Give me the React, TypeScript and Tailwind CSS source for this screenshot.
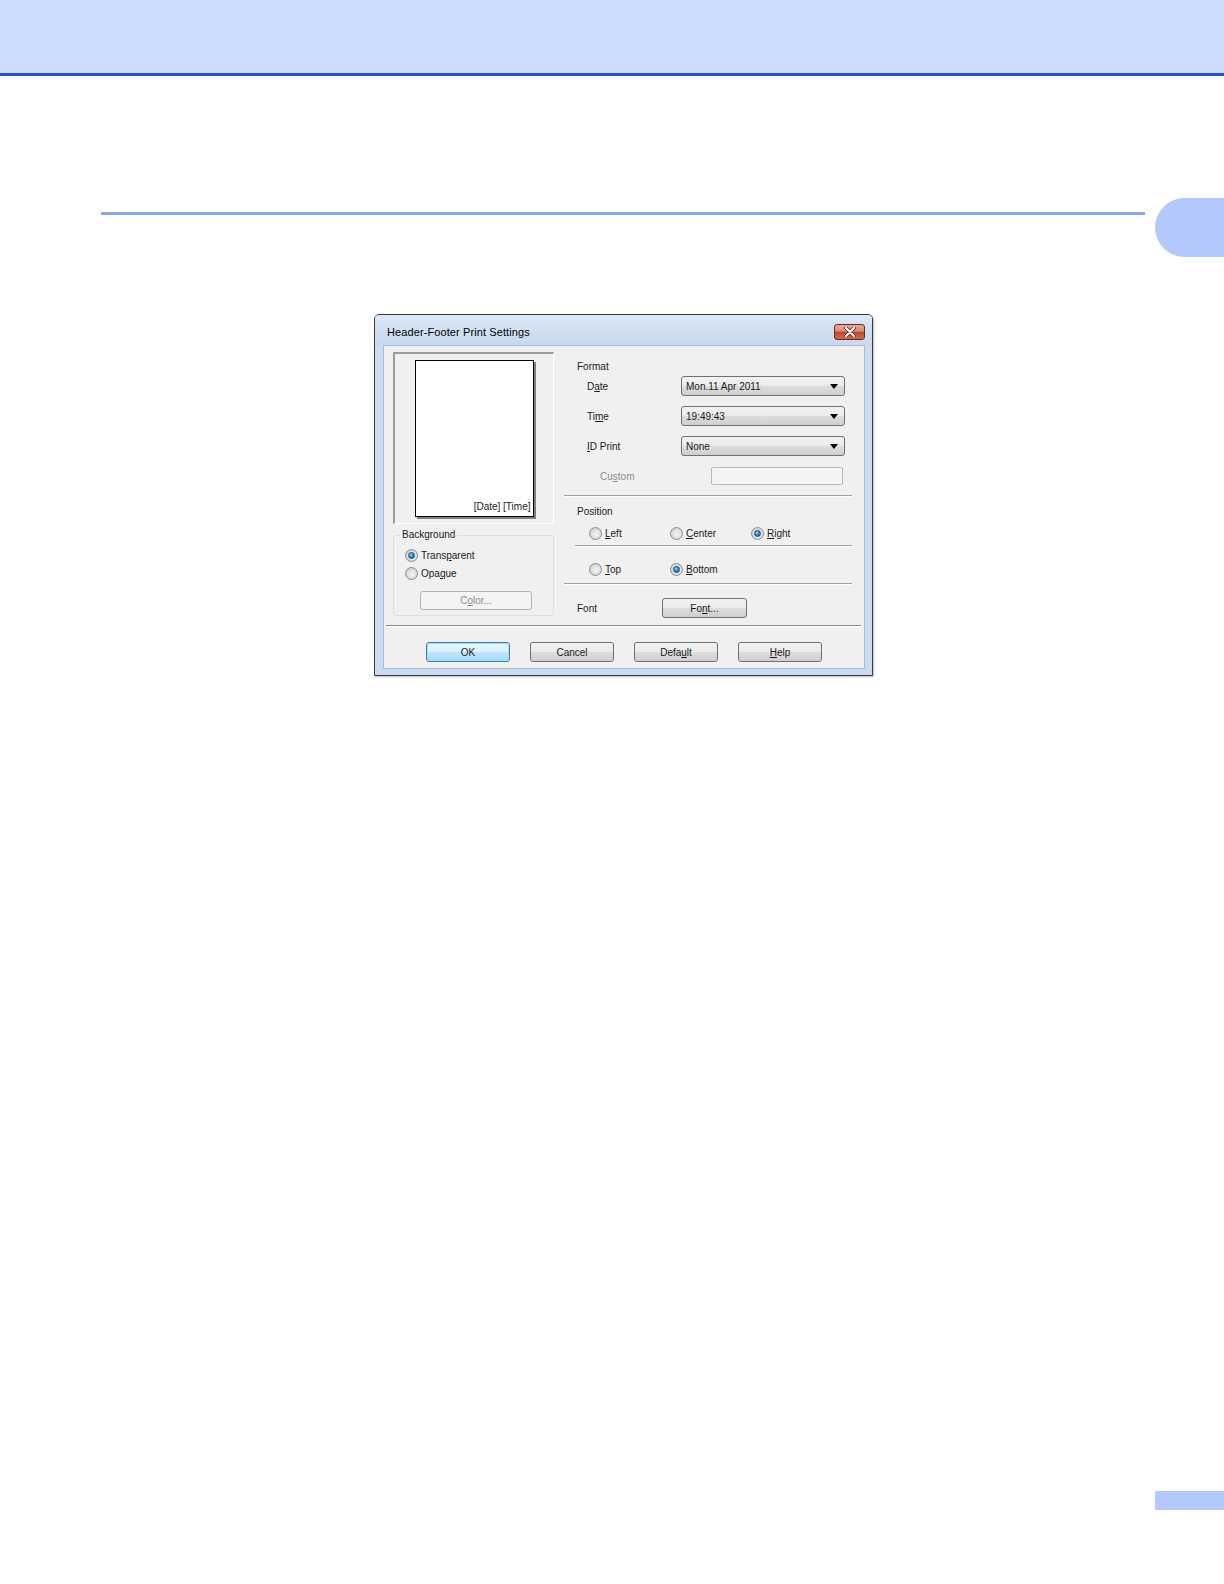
import React from 'react';

// Header-Footer Print Settings dialog, shown on a manual page.

const btnFace =
  'bg-[linear-gradient(#f2f2f2_0%,#ebebeb_50%,#dddddd_51%,#cfcfcf_100%)] border border-[#707070] rounded-[3px]';

const Radio = ({ checked }: { checked?: boolean }) => (
  <span className="w-[13px] h-[13px] shrink-0 rounded-full border border-[#8e8f8f] bg-[radial-gradient(circle_at_55%_55%,#f6f6f6_0%,#e2e2e2_45%,#bdbdbd_100%)] flex items-center justify-center">
    {checked && (
      <span className="w-[7px] h-[7px] rounded-full border border-[#1b4f7d] bg-[radial-gradient(circle_at_40%_35%,#9be0ff_0%,#2a8fd4_45%,#0b4a85_100%)]" />
    )}
  </span>
);

const RadioItem = ({ checked, children, w }: { checked?: boolean; children: React.ReactNode; w?: string }) => (
  <div className={`flex items-center gap-[3px] h-[14px] ${w ?? ''}`}>
    <Radio checked={checked} />
    <span>{children}</span>
  </div>
);

const Combo = ({ value }: { value: string }) => (
  <div className={`w-[164px] h-[20px] flex items-center justify-between pl-[4px] pr-[6px] ${btnFace}`}>
    <span>{value}</span>
    <svg width="8" height="5" viewBox="0 0 8 5">
      <polygon points="0,0 8,0 4,5" fill="#000" />
    </svg>
  </div>
);

const Button = ({ children, primary, w = 'w-[84px]' }: { children: React.ReactNode; primary?: boolean; w?: string }) => (
  <div
    className={`${w} h-[20px] flex items-center justify-center rounded-[3px] border ${
      primary
        ? 'border-[#3c7fb1] bg-[linear-gradient(#eaf6fd_0%,#d9f0fc_50%,#bee6fd_51%,#a7d9f5_100%)] shadow-[inset_0_0_0_1px_#a6dcf5]'
        : btnFace
    }`}
  >
    {children}
  </div>
);

const Sep = ({ className = '' }: { className?: string }) => (
  <div className={`h-[2px] border-t border-[#a0a0a0] border-b border-b-white ${className}`} />
);

const u = (s: string) => <span className="underline">{s}</span>;

export default function App() {
  return (
    <div className="min-h-[1584px] flex flex-col bg-white font-['Liberation_Sans',Arial,sans-serif] text-[10px] text-[#1a1a1a]">
      {/* bandeau du haut */}
      <div className="h-[76px] bg-[#cddcfd] border-b-[3px] border-[#1a56db]" />

      {/* trait de section + onglet */}
      <div className="flex items-start mt-[122px]">
        <div className="ml-[101px] mt-[14px] flex-1 h-[3px] bg-[#8aa4ef]" />
        <div className="ml-[10px] w-[69px] h-[59px] rounded-l-[30px] bg-[#b3c9fb]" />
      </div>

      {/* dialogue */}
      <div className="ml-[374px] mt-[57px] w-[499px] border border-[#3a3a3a] rounded-t-[5px] bg-[#c9dcf1] pl-[8px] pr-[7px] pb-[6px] shadow-[1px_1px_2px_rgba(0,0,0,0.25)]">
        {/* barre de titre */}
        <div className="h-[30px] -ml-[8px] -mr-[7px] pl-[12px] pr-[7px] rounded-t-[4px] bg-[linear-gradient(#dbe8f6,#c6d9ef)] flex items-center justify-between pt-[4px]">
          <span className="text-[11px] tracking-[0.1px] text-black">Header-Footer Print Settings</span>
          <div className="w-[31px] h-[16px] rounded-[3px] border border-[#6b2a1c] bg-[linear-gradient(#e9a99a_0%,#d88a74_45%,#c0482c_50%,#d5694a_100%)] flex items-center justify-center">
            <svg width="12" height="10" viewBox="0 0 12 10">
              <path d="M2 1 L10 9 M10 1 L2 9" stroke="#5b2014" strokeWidth="3.6" strokeLinecap="round" />
              <path d="M2 1 L10 9 M10 1 L2 9" stroke="#ffffff" strokeWidth="2.2" strokeLinecap="round" />
            </svg>
          </div>
        </div>

        {/* zone client */}
        <div className="bg-[#f0f0f0] border border-[#a9bcd1] pt-[6px] pb-[6px]">
          <div className="flex items-start pl-[9px]">
            {/* colonne gauche */}
            <div className="w-[161px] flex flex-col">
              <div className="h-[172px] border-t-2 border-l-2 border-t-[#9a9a9a] border-l-[#9a9a9a] border-r border-b border-r-white border-b-white flex justify-center pt-[6px]">
                <div className="w-[119px] h-[157px] bg-white border border-black shadow-[2px_2px_0_#808080] flex items-end justify-end pr-[2px] pb-[2px]">
                  <span>[Date] [Time]</span>
                </div>
              </div>
              <fieldset className="mt-[4px] border border-[#d5dfe5] rounded-[3px] px-[11px] pb-[5px]">
                <legend className="px-[2px] -ml-[5px] leading-[14px]">Background</legend>
                <div className="mt-[6px]">
                  <RadioItem checked>Trans{u('p')}arent</RadioItem>
                </div>
                <div className="mt-[4px]">
                  <RadioItem>Opa{u('q')}ue</RadioItem>
                </div>
                <div className="mt-[11px] ml-[15px] w-[112px] h-[19px] border border-[#adb2b5] rounded-[3px] bg-[#f4f4f4] flex items-center justify-center text-[#8d8d8d]">
                  C{u('o')}lor...
                </div>
              </fieldset>
            </div>

            {/* colonne droite */}
            <div className="ml-[10px] w-[288px] flex flex-col">
              <div className="mt-[8px] h-[14px] leading-[14px] pl-[13px]">Format</div>

              <div className="mt-[2px] h-[20px] flex items-center">
                <span className="w-[117px] pl-[23px]">D{u('a')}te</span>
                <Combo value="Mon.11 Apr 2011" />
              </div>
              <div className="mt-[10px] h-[20px] flex items-center">
                <span className="w-[117px] pl-[23px]">Ti{u('m')}e</span>
                <Combo value="19:49:43" />
              </div>
              <div className="mt-[10px] h-[20px] flex items-center">
                <span className="w-[117px] pl-[23px]">{u('I')}D Print</span>
                <Combo value="None" />
              </div>
              <div className="mt-[11px] h-[18px] flex items-center">
                <span className="w-[147px] pl-[36px] text-[#8d8d8d]">Cu{u('s')}tom</span>
                <div className="w-[132px] h-[18px] border border-[#b5b9bd] rounded-[2px] bg-[#f4f4f4]" />
              </div>

              <Sep className="mt-[10px]" />

              <div className="mt-[8px] h-[14px] leading-[14px] pl-[13px]">Position</div>
              <div className="mt-[7px] flex pl-[25px]">
                <RadioItem w="w-[81px]">{u('L')}eft</RadioItem>
                <RadioItem w="w-[81px]">{u('C')}enter</RadioItem>
                <RadioItem checked w="w-[81px]">{u('R')}ight</RadioItem>
              </div>
              <Sep className="mt-[5px] ml-[11px]" />
              <div className="mt-[15px] flex pl-[25px]">
                <RadioItem w="w-[81px]">{u('T')}op</RadioItem>
                <RadioItem checked w="w-[81px]">{u('B')}ottom</RadioItem>
              </div>
              <Sep className="mt-[7px]" />

              <div className="mt-[13px] h-[20px] flex items-center">
                <span className="w-[98px] pl-[13px]">Font</span>
                <Button w="w-[85px]">Fo{u('n')}t...</Button>
              </div>
            </div>
          </div>

          <div className="mt-[7px] ml-[2px] mr-[3px] h-[2px] border-t border-[#8a8a8a] border-b border-b-white" />

          <div className="mt-[15px] flex gap-[20px] pl-[42px]">
            <Button primary>OK</Button>
            <Button>Cancel</Button>
            <Button>Defa{u('u')}lt</Button>
            <Button>{u('H')}elp</Button>
          </div>
        </div>
      </div>

      {/* pastille de numéro de page */}
      <div className="mt-auto mb-[74px] self-end w-[69px] h-[19px] bg-[#b3c9fb]" />
    </div>
  );
}
